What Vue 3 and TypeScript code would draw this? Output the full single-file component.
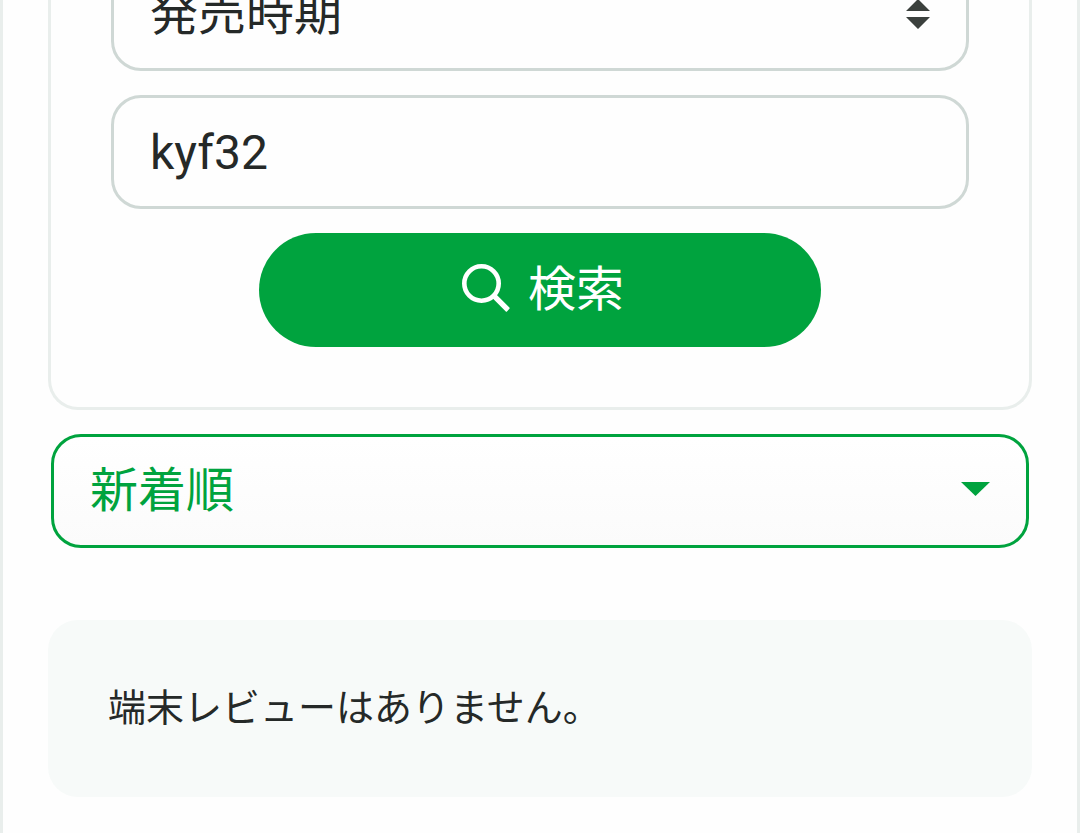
<script setup lang="ts">
import { ref } from 'vue'

const period = ref('')
const keyword = ref('kyf32')
const order = ref('new')
</script>

<template>
  <main class="page">
    <form class="panel" role="search" @submit.prevent>
      <div class="select-wrap">
        <select v-model="period" class="field" aria-label="発売時期">
          <option value="">発売時期</option>
        </select>
        <svg class="arrow" width="24" height="30" viewBox="0 0 24 30" aria-hidden="true">
          <path d="M12 0 24 12H0ZM0 18H24L12 30Z" fill="#3b403d" />
        </svg>
      </div>
      <input v-model="keyword" class="field" type="text" aria-label="キーワード" />
      <button class="submit" type="submit">
        <svg width="48" height="48" viewBox="0 0 48 48" fill="none" stroke="#fff" aria-hidden="true">
          <circle cx="19.5" cy="19.5" r="17.2" stroke-width="4.6" />
          <path d="M34.4 30.6 47.4 43.6Q48 44.2 47.4 44.8L45 47.4Q44.4 48 43.8 47.4L30.6 34.2Z" fill="#fff" stroke="none" />
        </svg>
        <span class="submit-label">検索</span>
      </button>
    </form>

    <div class="select-wrap sort-wrap">
      <select v-model="order" class="field sort" aria-label="並び順">
        <option value="new">新着順</option>
      </select>
      <svg class="arrow sort-arrow" width="29" height="14" viewBox="0 0 29 14" aria-hidden="true">
        <path d="M0 0H29L14.5 14Z" fill="#00a33e" />
      </svg>
    </div>

    <p class="notice">端末レビューはありません。</p>
  </main>
</template>

<style>
body {
  margin: 0;
  background: #fefefe;
}
</style>

<style scoped>
.page {
  box-sizing: border-box;
  min-height: 100vh;
  padding: 0 45px 36px;
  overflow: hidden;
  border: solid #e9eeec;
  border-width: 0 3px;
  color: #252928;
  font-family: Roboto, "Noto Sans CJK JP", sans-serif;
}

.panel {
  display: flex;
  flex-direction: column;
  align-items: center;
  gap: 24px;
  margin-top: -43px;
  padding: 0 60px 60px;
  border: solid #e9eeec;
  border-width: 0 3px 3px;
  border-radius: 0 0 30px 30px;
}

.select-wrap {
  display: grid;
  align-items: center;
  width: 100%;
}

.select-wrap > * {
  grid-area: 1 / 1;
}

.field {
  box-sizing: border-box;
  width: 100%;
  height: 114px;
  margin: 0;
  padding: 0 36px;
  border: 3px solid #cfd8d5;
  border-radius: 30px;
  background: transparent;
  appearance: none;
  color: inherit;
  font: inherit;
  font-size: 48px;
}

select.field {
  padding-bottom: 2px;
}

.arrow {
  justify-self: end;
  margin-right: 39px;
  pointer-events: none;
}

.sort-arrow {
  margin-bottom: 4px;
}

.submit {
  display: flex;
  align-items: center;
  justify-content: center;
  gap: 18px;
  width: 562px;
  max-width: 100%;
  height: 114px;
  padding: 0 0 4px 6px;
  border: 0;
  border-radius: 57px;
  background: #00a33e;
  color: #fff;
  font: inherit;
  font-size: 48px;
}

.submit-label {
  padding-bottom: 6px;
}

.sort-wrap {
  box-sizing: border-box;
  margin-top: 24px;
  padding: 0 3px;
}

.sort {
  border-color: #00a33e;
  background: linear-gradient(#fff, #fbfbfb);
  color: #00a33e;
}

.notice {
  margin: 72px 0 0;
  padding: 60px;
  border-radius: 30px;
  background: #f7faf9;
  font-size: 38px;
  line-height: 57px;
}
</style>
